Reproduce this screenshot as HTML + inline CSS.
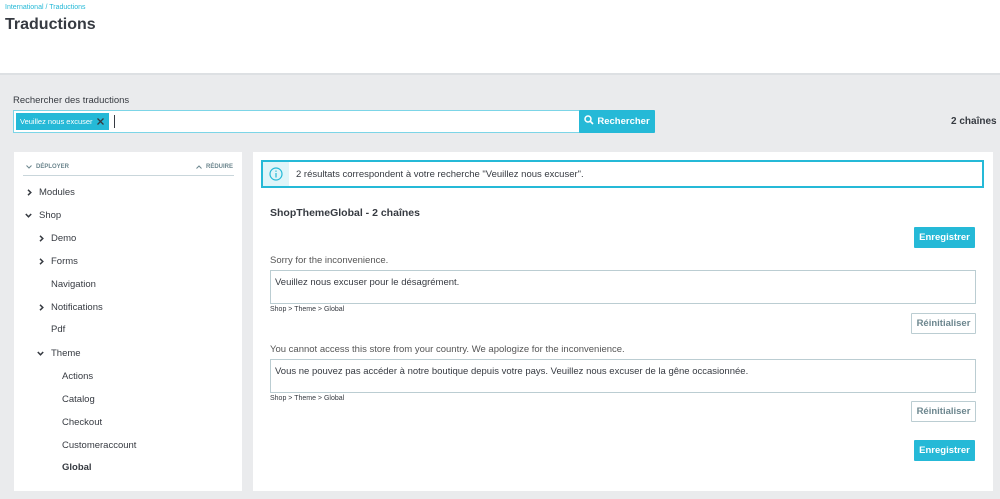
<!DOCTYPE html>
<html><head><meta charset="utf-8"><style>
*{box-sizing:border-box;margin:0;padding:0}
body{width:1000px;height:499px;background:#eaebed;font-family:"Liberation Sans",sans-serif;color:#363a41;position:relative;overflow:hidden;font-size:9px}
.a{position:absolute;white-space:nowrap}
.hdr{position:absolute;left:0;top:0;width:1000px;height:75px;background:#fff;border-bottom:2px solid #dde0e3}
.panel{position:absolute;background:#fff}
.t{position:absolute;font-size:9.5px;color:#363a41;white-space:nowrap}
.btnb{position:absolute;background:#25b9d7;color:#fff;font-weight:bold;font-size:9.5px;text-align:center;border-radius:1px}
.btnw{position:absolute;background:#fff;border:1px solid #bbcdd2;color:#6c868e;font-weight:bold;font-size:9.5px;text-align:center;border-radius:1px}
.ta{position:absolute;border:1px solid #bbcdd2;background:#fff;font-size:9.5px;padding:6px 4px;color:#363a41}
.r{position:absolute;width:7px;height:7px}
</style></head><body>
<div class="hdr"></div>
<div class="a" style="left:5px;top:4px;font-size:7px;color:#25b9d7">International / Traductions</div>
<div class="a" style="left:5px;top:16px;font-size:16px;font-weight:bold;color:#363a41">Traductions</div>

<div class="a" style="left:13px;top:95px;font-size:9.5px;color:#363a41">Rechercher des traductions</div>
<div class="a" style="left:13px;top:110px;width:567px;height:23px;background:#fff;border:1px solid #7cd5e7"></div>
<div class="a" style="left:16px;top:113px;width:93px;height:17px;background:#25b9d7;color:#fff;font-size:7.5px;line-height:17px;padding-left:4px">Veuillez nous excuser</div>
<svg class="a" style="left:97px;top:118px" width="7" height="7" viewBox="0 0 7 7"><path d="M0.5 0.5L6.5 6.5M6.5 0.5L0.5 6.5" stroke="#363a41" stroke-width="1.3"/></svg>
<div class="a" style="left:114px;top:115px;width:1px;height:13px;background:#363a41"></div>
<div class="btnb" style="left:579px;top:110px;width:76px;height:23px;line-height:23px"><svg width="10" height="10" viewBox="0 0 10 10" style="vertical-align:-1px;margin-right:3px"><circle cx="4" cy="4" r="3" stroke="#fff" stroke-width="1.5" fill="none"/><path d="M6.2 6.2L9 9" stroke="#fff" stroke-width="1.6"/></svg>Rechercher</div>
<div class="a" style="left:951px;top:116px;font-size:10px;font-weight:bold;color:#363a41;width:42px;text-align:right">2 chaînes</div>

<div class="panel" style="left:14px;top:152px;width:228px;height:339px"></div>
<svg class="a" style="left:26px;top:165px" width="6" height="4" viewBox="0 0 6 4"><path d="M0.5 0.5L3 3L5.5 0.5" stroke="#6c868e" fill="none"/></svg>
<div class="a" style="left:36px;top:164px;font-size:6px;font-weight:bold;color:#6c868e">DÉPLOYER</div>
<svg class="a" style="left:196px;top:165px" width="6" height="4" viewBox="0 0 6 4"><path d="M0.5 3.5L3 1L5.5 3.5" stroke="#6c868e" fill="none"/></svg>
<div class="a" style="left:206px;top:164px;font-size:6px;font-weight:bold;color:#6c868e">RÉDUIRE</div>
<div class="a" style="left:23px;top:175px;width:211px;height:1px;background:#c9d6db"></div>
<svg class="r" style="left:26px;top:189px" viewBox="0 0 7 7"><path d="M2 0.8L4.8 3.5L2 6.2" stroke="#363a41" stroke-width="1.5" fill="none"/></svg><div class="t" style="left:39px;top:187px">Modules</div>
<svg class="r" style="left:25px;top:212px" viewBox="0 0 7 7"><path d="M0.8 2L3.5 4.8L6.2 2" stroke="#363a41" stroke-width="1.5" fill="none"/></svg><div class="t" style="left:39px;top:210px">Shop</div>
<svg class="r" style="left:38px;top:235px" viewBox="0 0 7 7"><path d="M2 0.8L4.8 3.5L2 6.2" stroke="#363a41" stroke-width="1.5" fill="none"/></svg><div class="t" style="left:51px;top:233px">Demo</div>
<svg class="r" style="left:38px;top:258px" viewBox="0 0 7 7"><path d="M2 0.8L4.8 3.5L2 6.2" stroke="#363a41" stroke-width="1.5" fill="none"/></svg><div class="t" style="left:51px;top:256px">Forms</div>
<div class="t" style="left:51px;top:279px">Navigation</div>
<svg class="r" style="left:38px;top:304px" viewBox="0 0 7 7"><path d="M2 0.8L4.8 3.5L2 6.2" stroke="#363a41" stroke-width="1.5" fill="none"/></svg><div class="t" style="left:51px;top:302px">Notifications</div>
<div class="t" style="left:51px;top:324px">Pdf</div>
<svg class="r" style="left:37px;top:350px" viewBox="0 0 7 7"><path d="M0.8 2L3.5 4.8L6.2 2" stroke="#363a41" stroke-width="1.5" fill="none"/></svg><div class="t" style="left:51px;top:348px">Theme</div>
<div class="t" style="left:62px;top:371px">Actions</div>
<div class="t" style="left:62px;top:394px">Catalog</div>
<div class="t" style="left:62px;top:417px">Checkout</div>
<div class="t" style="left:62px;top:440px">Customeraccount</div>
<div class="t" style="left:62px;top:462px;font-weight:bold">Global</div>

<div class="panel" style="left:253px;top:152px;width:740px;height:339px"></div>
<div class="a" style="left:261px;top:160px;width:723px;height:28px;border:2px solid #25b9d7;background:#fff"></div>
<div class="a" style="left:263px;top:162px;width:26px;height:24px;background:#dff5f9"></div>
<svg class="a" style="left:269px;top:167px" width="14" height="14" viewBox="0 0 14 14"><circle cx="7" cy="7" r="6" fill="none" stroke="#25b9d7" stroke-width="1.2"/><rect x="6.4" y="6" width="1.2" height="4.5" fill="#25b9d7"/><rect x="6.4" y="3.5" width="1.2" height="1.3" fill="#25b9d7"/></svg>
<div class="a" style="left:296px;top:169px;font-size:9.5px">2 résultats correspondent à votre recherche "Veuillez nous excuser".</div>
<div class="a" style="left:270px;top:207px;font-size:10.5px;font-weight:bold">ShopThemeGlobal - 2 chaînes</div>
<div class="btnb" style="left:914px;top:227px;width:61px;height:21px;line-height:21px">Enregistrer</div>
<div class="a" style="left:270px;top:255px;font-size:9.5px;color:#555">Sorry for the inconvenience.</div>
<div class="ta" style="left:270px;top:270px;width:706px;height:34px">Veuillez nous excuser pour le désagrément.</div>
<div class="a" style="left:270px;top:306px;font-size:7px;color:#363a41">Shop &gt; Theme &gt; Global</div>
<div class="btnw" style="left:911px;top:313px;width:65px;height:21px;line-height:19px">Réinitialiser</div>
<div class="a" style="left:270px;top:344px;font-size:9.5px;color:#555">You cannot access this store from your country. We apologize for the inconvenience.</div>
<div class="ta" style="left:270px;top:359px;width:706px;height:34px">Vous ne pouvez pas accéder à notre boutique depuis votre pays. Veuillez nous excuser de la gêne occasionnée.</div>
<div class="a" style="left:270px;top:395px;font-size:7px;color:#363a41">Shop &gt; Theme &gt; Global</div>
<div class="btnw" style="left:911px;top:401px;width:65px;height:21px;line-height:19px">Réinitialiser</div>
<div class="btnb" style="left:914px;top:440px;width:61px;height:21px;line-height:21px">Enregistrer</div>
</body></html>
